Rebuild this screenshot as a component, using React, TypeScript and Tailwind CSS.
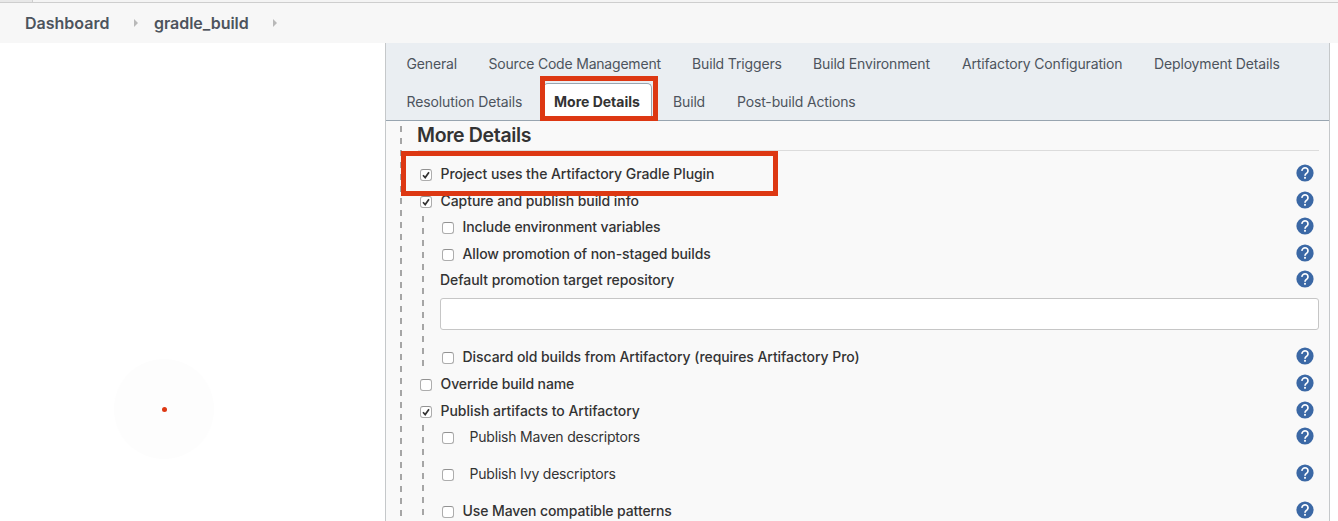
import React from "react";

function HelpIcon() {
  return (
    <svg width="18" height="18" viewBox="0 0 18 18" className="block shrink-0">
      <circle cx="9" cy="9" r="8.6" fill="#3b68a5" />
      <path d="M6 6.9a3 2.9 0 1 1 5 2C9.7 9.9 9 10.3 9 11.7" fill="none" stroke="#fff" strokeWidth="1.7" />
      <rect x="8.1" y="12.9" width="1.8" height="1.8" fill="#fff" />
    </svg>
  );
}

function Checkbox({ checked = false }: { checked?: boolean }) {
  return (
    <span className="relative top-[1px] block h-3 w-3 shrink-0 rounded-[3px] border border-[#adadad] border-t-[#929292] bg-white">
      {checked && (
        <svg width="10" height="10" viewBox="0 0 10 10" className="block">
          <path d="M2 5.2L4.2 7.6L8 2.2" fill="none" stroke="#333" strokeWidth="1.7" />
        </svg>
      )}
    </span>
  );
}

type RowProps = {
  label: string;
  size: string;
  gap?: string;
  checked?: boolean;
  box?: boolean;
  text?: string;
  help?: string;
};

function Row({
  label,
  size,
  gap = "gap-[8.5px]",
  checked,
  box = true,
  text = "font-medium tracking-[-0.06px]",
  help = "mt-1",
}: RowProps) {
  return (
    <div className={`flex shrink-0 items-center justify-between pr-[5px] ${size}`}>
      <label className={`flex items-center ${gap}`}>
        {box && <Checkbox checked={checked} />}
        <span className={`text-sm leading-5 whitespace-nowrap ${text}`}>{label}</span>
      </label>
      <span className={`self-start ${help}`}>
        <HelpIcon />
      </span>
    </div>
  );
}

function Crumb({ label, text }: { label: string; text: string }) {
  return (
    <div className="flex items-center gap-6">
      <span className={`text-base leading-5 font-semibold ${text}`}>{label}</span>
      <svg width="4" height="8" viewBox="0 0 4 8">
        <path d="M0 0L4 4L0 8Z" fill="#b9b9b9" />
      </svg>
    </div>
  );
}

function Tab({ label, size, text = "tracking-[-0.15px]" }: { label: string; size: string; text?: string }) {
  return (
    <div className={`flex h-[38px] shrink-0 items-center ${size}`}>
      <span className={`whitespace-nowrap ${text}`}>{label}</span>
    </div>
  );
}

const dash = "bg-[repeating-linear-gradient(to_bottom,#a6a6a6_0px,#a6a6a6_6px,transparent_6px,transparent_12px)]";

export default function App() {
  return (
    <div className="flex h-[521px] w-[1338px] flex-col overflow-hidden bg-white font-['Inter','Liberation_Sans',sans-serif] text-[#333]">
      <div className="flex h-[3px] shrink-0 border-b border-[#cecece] bg-[#f4f4f4]">
        <div className="w-[33px] border-r border-[#cecece] bg-[#e8e8e8]" />
      </div>
      <nav className="flex h-10 shrink-0 items-center gap-4 bg-[#f7f7f7] pl-[25px] text-[#4d545d]">
        <Crumb label="Dashboard" text="w-[85px]" />
        <Crumb label="gradle_build" text="w-[95px] tracking-[-0.05px]" />
      </nav>
      <div className="flex min-h-0 flex-1">
        <aside className="flex w-[385px] shrink-0 pt-[316px] pl-[114px]">
          <div className="flex h-[100px] w-[100px] items-center justify-center rounded-full bg-[#fdfdfd]">
            <div className="h-[5px] w-[5px] rounded-full bg-[#dd3813]" />
          </div>
        </aside>
        <main className="relative flex w-[945px] shrink-0 flex-col border-x border-[#c5c8ca] bg-[#f9f9f9]">
          <div className="h-[78px] shrink-0 border-b border-[#98a5b0] bg-[#eaeef2] pt-[2px] pl-[20.5px] text-sm leading-5 text-[#4d545d]">
            <div className="flex">
              <Tab label="General" size="w-[82px]" />
              <Tab label="Source Code Management" size="w-[203.5px]" text="tracking-[-0.2px]" />
              <Tab label="Build Triggers" size="w-[121px]" />
              <Tab label="Build Environment" size="w-[149px]" />
              <Tab label="Artifactory Configuration" size="w-[192px]" />
              <Tab label="Deployment Details" size="w-[130px]" />
            </div>
            <div className="flex">
              <Tab label="Resolution Details" size="w-[136.5px]" text="tracking-[-0.12px]" />
              <Tab
                label="More Details"
                size="w-[109px] rounded-t-[5px] border border-b-0 border-[#98a5b0] bg-white pb-[2px] pl-[10px] text-[#333]"
                text="font-bold"
              />
              <Tab label="Build" size="ml-[21px] w-16" />
              <Tab label="Post-build Actions" size="w-[130px]" />
            </div>
          </div>
          <div className="flex min-h-0 flex-1 pl-[14px]">
            <div className={`mt-[5px] w-[2px] shrink-0 ${dash}`} />
            <div className="flex flex-1 flex-col pr-[10px] pl-4">
              <h2 className="h-[30px] shrink-0 border-b border-[#dcdcdc] text-[19.5px] leading-7 font-semibold tracking-[-0.35px]">
                <span className="-ml-px">More Details</span>
              </h2>
              <Row label="Project uses the Artifactory Gradle Plugin" size="mt-[9px] h-[27px] pl-[2px]" checked />
              <Row label="Capture and publish build info" size="h-[27px] pl-[2px]" checked />
              <div className="flex shrink-0">
                <div className={`mt-[2px] mb-[3px] ml-1 w-[2px] shrink-0 ${dash}`} />
                <div className="flex-1 pl-4">
                  <Row
                    label="Include environment variables"
                    size="h-[26px] pl-[2px]"
                    text="font-medium tracking-[-0.12px]"
                    help="mt-[3px]"
                  />
                  <Row
                    label="Allow promotion of non-staged builds"
                    size="h-[27px] pl-[2px]"
                    text="font-medium tracking-[-0.1px]"
                  />
                  <Row
                    label="Default promotion target repository"
                    size="h-[26px]"
                    box={false}
                    help="mt-[3px]"
                    text="font-medium tracking-[-0.04px]"
                  />
                  <input
                    type="text"
                    className="mt-[5px] mb-[13px] block h-8 w-full rounded-[3px] border border-[#c6c6c6] bg-white px-2 text-sm"
                  />
                  <Row label="Discard old builds from Artifactory (requires Artifactory Pro)" size="h-[27px] pl-[2px]" />
                </div>
              </div>
              <Row label="Override build name" size="h-7 pl-[2px]" text="font-medium tracking-[-0.1px]" />
              <Row
                label="Publish artifacts to Artifactory"
                size="h-[26px] pl-[2px]"
                checked
                help="mt-[3px]"
                text="font-medium tracking-[-0.03px]"
              />
              <div className="flex shrink-0">
                <div className={`mt-[1px] ml-1 w-[2px] shrink-0 ${dash}`} />
                <div className="flex-1 pl-4">
                  <Row
                    label="Publish Maven descriptors"
                    size="h-[26px] pl-[2px]"
                    gap="gap-[15.5px]"
                    text="tracking-[-0.2px]"
                    help="mt-[3px]"
                  />
                  <Row
                    label="Publish Ivy descriptors"
                    size="my-[11px] h-[26px] pl-[2px]"
                    gap="gap-[15.5px]"
                    text="tracking-[-0.2px]"
                    help="mt-[3px]"
                  />
                  <Row
                    label="Use Maven compatible patterns"
                    size="h-[26px] pl-[2px]"
                    text="font-medium tracking-[-0.1px]"
                    help="mt-[3px]"
                  />
                </div>
              </div>
            </div>
          </div>
          <div className="pointer-events-none absolute top-[32.5px] left-[154px] h-[45px] w-[118px] border-[5px] border-[#dd3813]" />
          <div className="pointer-events-none absolute top-[108px] left-[15px] h-[45px] w-[377px] border-[5px] border-[#dd3813]" />
        </main>
      </div>
    </div>
  );
}
